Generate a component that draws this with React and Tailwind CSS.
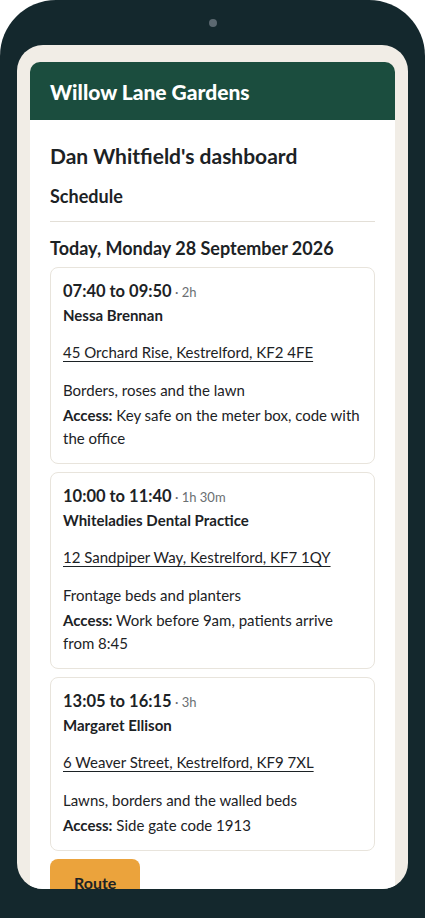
const jobs = [
  {
    time: "07:40 to 09:50",
    dur: "2h",
    name: "Nessa Brennan",
    address: "45 Orchard Rise, Kestrelford, KF2 4FE",
    desc: "Borders, roses and the lawn",
    access: "Key safe on the meter box, code with the office",
  },
  {
    time: "10:00 to 11:40",
    dur: "1h 30m",
    name: "Whiteladies Dental Practice",
    address: "12 Sandpiper Way, Kestrelford, KF7 1QY",
    desc: "Frontage beds and planters",
    access: "Work before 9am, patients arrive from 8:45",
  },
  {
    time: "13:05 to 16:15",
    dur: "3h",
    name: "Margaret Ellison",
    address: "6 Weaver Street, Kestrelford, KF9 7XL",
    desc: "Lawns, borders and the walled beds",
    access: "Side gate code 1913",
  },
];

function JobCard({ job }) {
  return (
    <div className="rounded-[8px] border border-[#e8e4dc] bg-white px-[12px] pt-[12px] pb-[13px]">
      <div className="leading-[22px]">
        <span className="text-[16.5px] font-bold text-[#1c2225]">{job.time}</span>
        <span className="text-[13px] text-[#6b6f72]"> · {job.dur}</span>
      </div>
      <div className="mt-[1px] text-[15px] font-bold leading-[22px] text-[#1c2225]">{job.name}</div>
      <div className="mt-[15px] text-[15px] leading-[22px]">
        <a href="#" className="text-[#1c2225] underline underline-offset-[3px]">{job.address}</a>
      </div>
      <p className="mt-[15px] text-[15px] leading-[24px] text-[#1c2225]">{job.desc}</p>
      <p className="mt-[2px] text-[15px] leading-[23px] text-[#1c2225]">
        <span className="font-bold">Access:</span> {job.access}
      </p>
    </div>
  );
}

export default function App() {
  return (
    <div className="h-[918px] w-full overflow-hidden bg-white" style={{ fontFamily: "Lato, 'Noto Sans', sans-serif" }}>
      <div className="flex h-full flex-col rounded-t-[56px] bg-[#14282d]">
        <div className="flex h-[45px] items-center justify-center">
          <div className="mt-[1px] h-[8px] w-[8px] rounded-full bg-[#5b6870]"></div>
        </div>
        <div className="mx-[17px] flex h-[844px] flex-col overflow-hidden rounded-[26px] bg-[#f1ede6] px-[13px] pt-[17px]">
          <div className="flex h-[58px] shrink-0 items-center rounded-t-[10px] bg-[#1b4d3e] px-[20px]">
            <h1 className="text-[21px] font-black leading-none text-white">Willow Lane Gardens</h1>
          </div>
          <div className="flex-1 bg-white px-[20px] pt-[22px]">
            <h2 className="text-[21px] font-bold leading-[28px] text-[#1c2225]">Dan Whitfield's dashboard</h2>
            <h3 className="mt-[14px] text-[18px] font-bold leading-[24px] text-[#1c2225]">Schedule</h3>
            <div className="mt-[13px] h-px bg-[#e3dfd7]"></div>
            <h4 className="mt-[13px] text-[18px] font-bold leading-[26px] text-[#1c2225]">Today, Monday 28 September 2026</h4>
            <div className="mt-[6px] flex flex-col gap-[8px]">
              {jobs.map((j) => (
                <JobCard key={j.time} job={j} />
              ))}
            </div>
            <button className="mt-[8px] rounded-[8px] bg-[#eba33c] px-[24px] py-[12px] text-[16px] font-bold leading-[24px] text-[#1c2225]">
              Route
            </button>
          </div>
        </div>
      </div>
    </div>
  );
}
